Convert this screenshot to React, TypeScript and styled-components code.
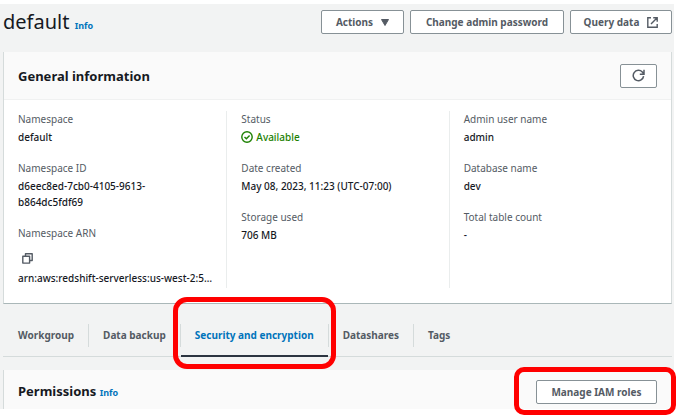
import React from "react";
import styled, { createGlobalStyle, css } from "styled-components";

const GlobalStyle = createGlobalStyle`
  * { box-sizing: border-box; }
  body {
    margin: 0;
    background: #ffffff;
    color: #16191f;
    font: 10px/16px "Noto Sans", "Open Sans", sans-serif;
  }
`;

const Page = styled.main`
  margin: 4px 6px 8px 0;
  padding: 0 2px 0 3px;
  background: #f2f3f3;
`;

const TopBar = styled.header`
  display: flex;
  justify-content: space-between;
  height: 48px;
  padding-top: 6px;
`;

const Title = styled.h1`
  margin: 0;
  font-size: 20px;
  line-height: 24px;
  font-weight: 400;
`;

const InfoLink = styled.a`
  color: #0073bb;
  font-size: 9px;
  font-weight: 700;
  text-decoration: none;
`;

const Actions = styled.div`
  display: flex;
  gap: 6px;
`;

const Button = styled.button<{ $width: number }>`
  display: inline-flex;
  align-items: center;
  justify-content: center;
  gap: 8px;
  width: ${(p) => p.$width}px;
  height: 24px;
  padding: 0;
  border: 1px solid #879196;
  border-radius: 2px;
  background: #ffffff;
  color: #545b64;
  font: 700 10px/16px "Noto Sans", "Open Sans", sans-serif;
  white-space: nowrap;
  cursor: pointer;
`;

const Card = styled.section<{ $open?: boolean }>`
  border: solid #d5dbdb;
  border-width: 0 1px ${(p) => (p.$open ? 0 : 1)}px;
  border-bottom-color: #aab7b8;
  background: #ffffff;
`;

const CardHeader = styled.div<{ $cut?: boolean }>`
  display: flex;
  align-items: center;
  justify-content: space-between;
  height: ${(p) => (p.$cut ? 39 : 48)}px;
  padding: ${(p) => (p.$cut ? "5px 14px 0" : "0 14px")};
  background: #fafafa;
  border-bottom: ${(p) => (p.$cut ? "0" : "1px solid #f0f1f1")};
`;

const Heading = styled.h2`
  margin: 0;
  font-size: 13px;
  line-height: 20px;
  font-weight: 700;
`;

const Columns = styled.div`
  display: grid;
  grid-template-columns: repeat(3, minmax(0, 1fr));
  padding: 11px 0 15px;
`;

const Column = styled.dl`
  display: flex;
  flex-direction: column;
  gap: 15px;
  margin: 0;
  padding: 0 24px 0 14px;
  min-height: 177px;

  & + & {
    border-left: 1px solid #eaeded;
  }
`;

const Field = styled.div`
  display: flex;
  flex-direction: column;
  gap: 2px;
`;

const Label = styled.dt`
  color: #545b64;
`;

const Value = styled.dd<{ $success?: boolean }>`
  margin: 0;
  font-weight: 500;
  ${(p) =>
    p.$success &&
    css`
      display: flex;
      align-items: center;
      gap: 3px;
      color: #1d8102;
    `}
`;

const Arn = styled.span`
  display: block;
  white-space: nowrap;
`;

const CopyButton = styled.button`
  display: block;
  height: 27px;
  padding: 4px 4px 0;
  border: 0;
  background: none;
  color: #545b64;
  cursor: pointer;

  svg {
    display: block;
  }
`;

const TabList = styled.nav`
  display: flex;
  height: 53px;
  margin-bottom: 13px;
  padding-left: 1px;
  border-bottom: 1px solid #d5dbdb;
`;

const TabSlot = styled.div`
  position: relative;
  display: flex;
  align-items: center;
  padding-top: 11px;

  & + &::before {
    content: "";
    width: 1px;
    height: 23px;
    background: #d5dbdb;
  }
`;

const Tab = styled.button<{ $active?: boolean }>`
  align-self: stretch;
  margin-bottom: -1px;
  padding: 0 14px;
  border: 0;
  border-bottom: 2px solid ${(p) => (p.$active ? "#2b3440" : "transparent")};
  background: none;
  color: ${(p) => (p.$active ? "#0073bb" : "#545b64")};
  font: 700 10px/16px "Noto Sans", "Open Sans", sans-serif;
  white-space: nowrap;
  cursor: pointer;
`;

const Marked = styled.div`
  position: relative;
  display: flex;
`;

const Highlight = styled.span<{ $inset: string; $radius: number }>`
  position: absolute;
  z-index: 1;
  inset: ${(p) => p.$inset};
  border: 5px solid #ff0000;
  border-radius: ${(p) => p.$radius}px;
  pointer-events: none;
`;

const CaretIcon = () => (
  <svg width="8" height="7" viewBox="0 0 8 7" aria-hidden="true">
    <path d="M0.5 0.5h7L4 6.5z" fill="currentColor" stroke="currentColor" strokeLinejoin="round" />
  </svg>
);

const ExternalIcon = () => (
  <svg width="11" height="11" viewBox="0 0 11 11" fill="none" stroke="currentColor" strokeWidth="1.4" aria-hidden="true">
    <path d="M4 0.8H0.8v9.4h9.4V7M6.2 0.8h4v4M10.2 0.8L4 7" />
  </svg>
);

const RefreshIcon = () => (
  <svg width="13" height="13" viewBox="0 0 13 13" fill="none" stroke="currentColor" strokeWidth="1.5" aria-hidden="true">
    <path d="M11.6 7.2A5.2 5.2 0 1 1 10.3 3L11.8 4.8M12 0.8v4.4H7.8" />
  </svg>
);

const CheckIcon = () => (
  <svg width="12" height="12" viewBox="0 0 12 12" fill="none" stroke="currentColor" strokeWidth="1.4" aria-hidden="true">
    <circle cx="6" cy="6" r="5.2" />
    <path d="M3.5 5.9l1.9 1.9 3.2-3.3" />
  </svg>
);

const CopyIcon = () => (
  <svg width="11" height="11" viewBox="0 0 11 11" fill="none" stroke="currentColor" strokeWidth="1.4" strokeLinejoin="round" aria-hidden="true">
    <path d="M3.5 3.2V0.8h6.7v6.7H7.8M0.8 3.3h6.8v6.8H0.8z" />
  </svg>
);

type Item = { label: string; value: string; kind?: "status" | "arn" };

const columns: Item[][] = [
  [
    { label: "Namespace", value: "default" },
    { label: "Namespace ID", value: "d6eec8ed-7cb0-4105-9613-b864dc5fdf69" },
    { label: "Namespace ARN", value: "arn:aws:redshift-serverless:us-west-2:5…", kind: "arn" },
  ],
  [
    { label: "Status", value: "Available", kind: "status" },
    { label: "Date created", value: "May 08, 2023, 11:23 (UTC-07:00)" },
    { label: "Storage used", value: "706 MB" },
  ],
  [
    { label: "Admin user name", value: "admin" },
    { label: "Database name", value: "dev" },
    { label: "Total table count", value: "-" },
  ],
];

const tabs = ["Workgroup", "Data backup", "Security and encryption", "Datashares", "Tags"];
const activeTab = "Security and encryption";

function FieldValue({ item }: { item: Item }) {
  if (item.kind === "status") {
    return (
      <Value $success>
        <CheckIcon />
        {item.value}
      </Value>
    );
  }
  if (item.kind === "arn") {
    return (
      <Value>
        <CopyButton type="button" aria-label="Copy namespace ARN">
          <CopyIcon />
        </CopyButton>
        <Arn>{item.value}</Arn>
      </Value>
    );
  }
  return <Value>{item.value}</Value>;
}

export default function App() {
  return (
    <>
      <GlobalStyle />
      <Page>
        <TopBar>
          <Title>
            default <InfoLink href="#namespace">Info</InfoLink>
          </Title>
          <Actions>
            <Button type="button" $width={83}>
              Actions <CaretIcon />
            </Button>
            <Button type="button" $width={154}>
              Change admin password
            </Button>
            <Button type="button" $width={102}>
              Query data <ExternalIcon />
            </Button>
          </Actions>
        </TopBar>

        <Card>
          <CardHeader>
            <Heading>General information</Heading>
            <Button type="button" $width={37} aria-label="Refresh">
              <RefreshIcon />
            </Button>
          </CardHeader>
          <Columns>
            {columns.map((items) => (
              <Column key={items[0].label}>
                {items.map((item) => (
                  <Field key={item.label}>
                    <Label>{item.label}</Label>
                    <FieldValue item={item} />
                  </Field>
                ))}
              </Column>
            ))}
          </Columns>
        </Card>

        <TabList>
          {tabs.map((name) => (
            <TabSlot key={name}>
              <Tab type="button" $active={name === activeTab} aria-current={name === activeTab}>
                {name}
              </Tab>
              {name === activeTab && <Highlight $inset="-7px -8px -13px -7px" $radius={14} />}
            </TabSlot>
          ))}
        </TabList>

        <Card $open>
          <CardHeader $cut>
            <Heading>
              Permissions <InfoLink href="#permissions">Info</InfoLink>
            </Heading>
            <Marked>
              <Button type="button" $width={121}>
                Manage IAM roles
              </Button>
              <Highlight $inset="-13px -19px -11px -22px" $radius={10} />
            </Marked>
          </CardHeader>
        </Card>
      </Page>
    </>
  );
}
